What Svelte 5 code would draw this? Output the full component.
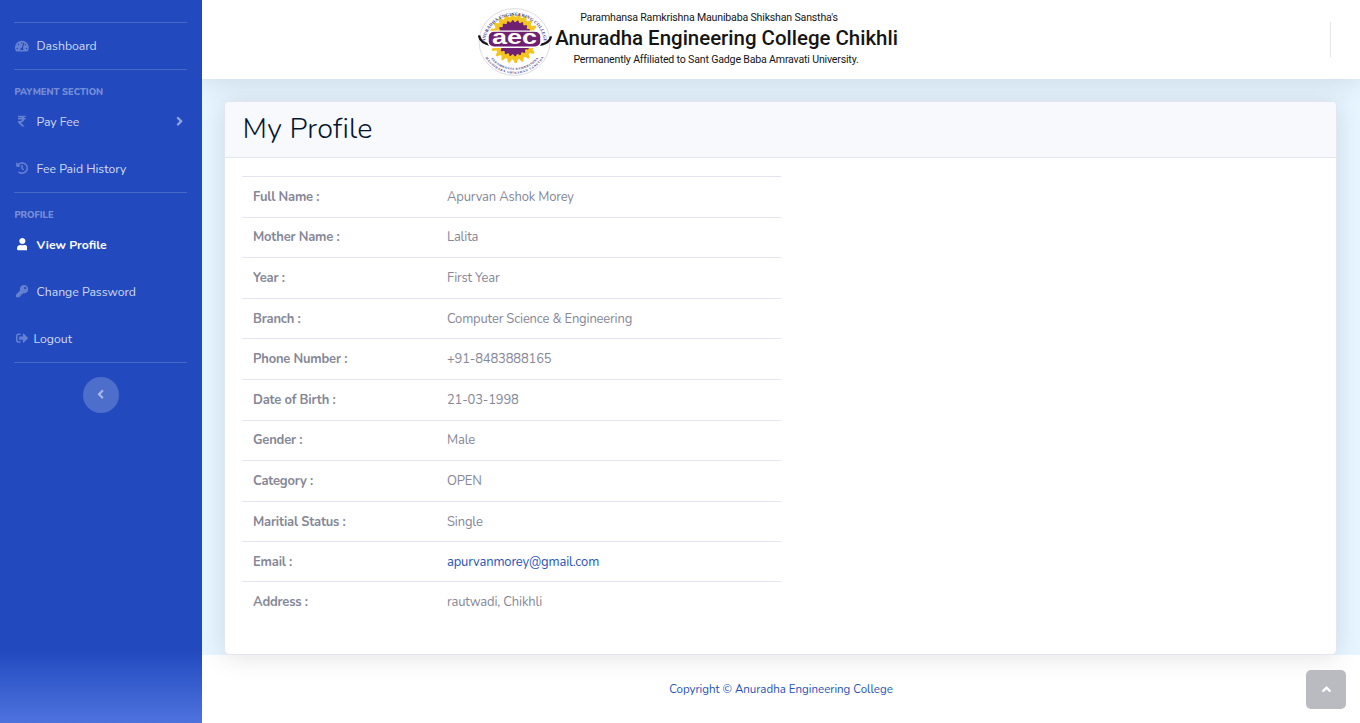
<script>
  const icons = {
    gauge: [576, 'M288 32C128.94 32 0 160.94 0 320c0 52.8 14.25 102.26 39.06 144.8 5.61 9.62 16.3 15.2 27.44 15.2h443c11.14 0 21.83-5.58 27.44-15.2C561.75 422.26 576 372.8 576 320c0-159.06-128.94-288-288-288zm0 64c14.71 0 26.58 10.13 30.32 23.65-1.11 2.26-2.64 4.23-3.45 6.67l-9.22 27.67c-5.13 3.49-10.97 6.01-17.64 6.01-17.67 0-32-14.33-32-32S270.33 96 288 96zM96 384c-17.67 0-32-14.33-32-32s14.33-32 32-32 32 14.33 32 32-14.33 32-32 32zm48-160c-17.67 0-32-14.33-32-32s14.33-32 32-32 32 14.33 32 32-14.33 32-32 32zm246.77-72.41l-61.33 184C343.13 347.33 352 364.54 352 384c0 11.72-3.38 22.55-8.88 32H232.88c-5.5-9.45-8.88-20.28-8.88-32 0-33.94 26.5-61.43 59.9-63.59l61.34-184.01c4.17-12.56 17.73-19.45 30.36-15.17 12.57 4.19 19.35 17.79 15.17 30.36zm14.66 57.2l15.52-46.55c3.47-1.29 7.13-2.23 11.05-2.23 17.67 0 32 14.33 32 32s-14.33 32-32 32c-11.38-.01-20.89-6.28-26.57-15.22zM480 384c-17.67 0-32-14.33-32-32s14.33-32 32-32 32 14.33 32 32-14.33 32-32 32z'],
    rupee: [320, 'M308 96c6.627 0 12-5.373 12-12V44c0-6.627-5.373-12-12-12H12C5.373 32 0 37.373 0 44v44.748c0 6.627 5.373 12 12 12h85.28c27.308 0 48.261 9.958 60.97 27.252H12c-6.627 0-12 5.373-12 12v40c0 6.627 5.373 12 12 12h158.757c-6.217 36.086-32.961 58.632-74.757 58.632H12c-6.627 0-12 5.373-12 12v53.012c0 3.349 1.4 6.546 3.861 8.818l165.052 152.356a12.001 12.001 0 0 0 8.139 3.182h82.562c10.924 0 16.166-13.408 8.139-20.818L116.871 319.906c76.499-2.34 131.144-53.395 138.318-127.906H308c6.627 0 12-5.373 12-12v-40c0-6.627-5.373-12-12-12h-58.69c-3.486-11.541-8.28-22.246-14.252-32H308z'],
    history: [512, 'M504 255.531c.253 136.64-111.18 248.372-247.82 248.468-59.015.042-113.223-20.53-155.822-54.911-11.077-8.94-11.905-25.541-1.839-35.607l11.267-11.267c8.609-8.609 22.353-9.551 31.891-1.984C173.062 425.135 212.781 440 256 440c101.705 0 184-82.311 184-184 0-101.705-82.311-184-184-184-48.814 0-93.149 18.969-126.068 49.932l50.754 50.754c10.08 10.08 2.941 27.314-11.313 27.314H24c-8.837 0-16-7.163-16-16V38.627c0-14.254 17.234-21.393 27.314-11.314l49.372 49.372C129.209 34.136 189.552 8 256 8c136.81 0 247.747 110.78 248 247.531zm-180.912 78.784l9.823-12.63c8.138-10.463 6.253-25.542-4.21-33.679L288 256.349V152c0-13.255-10.745-24-24-24h-16c-13.255 0-24 10.745-24 24v135.651l65.409 50.874c10.463 8.137 25.541 6.253 33.679-4.21z'],
    user: [448, 'M224 256c70.7 0 128-57.3 128-128S294.7 0 224 0 96 57.3 96 128s57.3 128 128 128zm89.6 32h-16.7c-22.2 10.2-46.9 16-72.9 16s-50.6-5.8-72.9-16h-16.7C60.2 288 0 348.2 0 422.4V464c0 26.5 21.5 48 48 48h352c26.5 0 48-21.5 48-48v-41.6c0-74.2-60.2-134.4-134.4-134.4z'],
    key: [512, 'M512 176.001C512 273.203 433.202 352 336 352c-11.22 0-22.19-1.062-32.827-3.069l-24.012 27.014A23.999 23.999 0 0 1 261.223 384H224v40c0 13.255-10.745 24-24 24h-40v40c0 13.255-10.745 24-24 24H24c-13.255 0-24-10.745-24-24v-78.059c0-6.365 2.529-12.47 7.029-16.971l161.802-161.802C163.108 213.814 160 195.271 160 176 160 78.798 238.797.001 335.999 0 433.488-.001 512 78.511 512 176.001zM336 128c0 26.51 21.49 48 48 48s48-21.49 48-48-21.49-48-48-48-48 21.49-48 48z'],
    logout: [512, 'M497 273L329 441c-15 15-41 4.5-41-17v-96H152c-13.3 0-24-10.7-24-24v-96c0-13.3 10.7-24 24-24h136V88c0-21.4 25.9-32 41-17l168 168c9.3 9.4 9.3 24.6 0 34zM192 436v-40c0-6.6-5.4-12-12-12H96c-17.7 0-32-14.3-32-32V160c0-17.7 14.3-32 32-32h84c6.6 0 12-5.4 12-12V76c0-6.6-5.4-12-12-12H96c-53 0-96 43-96 96v192c0 53 43 96 96 96h84c6.6 0 12-5.4 12-12z'],
    right: [256, 'M224.3 273l-136 136c-9.4 9.4-24.6 9.4-33.9 0l-22.6-22.6c-9.4-9.4-9.4-24.6 0-33.9l96.4-96.4-96.4-96.4c-9.4-9.4-9.4-24.6 0-33.9L54.3 103c9.4-9.4 24.6-9.4 33.9 0l136 136c9.5 9.4 9.5 24.6.1 34z'],
    left: [256, 'M31.7 239l136-136c9.4-9.4 24.6-9.4 33.9 0l22.6 22.6c9.4 9.4 9.4 24.6 0 33.9L127.9 256l96.4 96.4c9.4 9.4 9.4 24.6 0 33.9L201.7 409c-9.4 9.4-24.6 9.4-33.9 0l-136-136c-9.5-9.4-9.5-24.6-.1-34z'],
    up: [320, 'M177 159.7l136 136c9.4 9.4 9.4 24.6 0 33.9l-22.6 22.6c-9.4 9.4-24.6 9.4-33.9 0L160 255.9l-96.4 96.4c-9.4 9.4-24.6 9.4-33.9 0L7 329.7c-9.4-9.4-9.4-24.6 0-33.9l136-136c9.4-9.5 24.6-9.5 34-.1z']
  };

  const rows = [
    ['Full Name :', 'Apurvan Ashok Morey'],
    ['Mother Name :', 'Lalita'],
    ['Year :', 'First Year'],
    ['Branch :', 'Computer Science & Engineering'],
    ['Phone Number :', '+91-8483888165'],
    ['Date of Birth :', '21-03-1998'],
    ['Gender :', 'Male'],
    ['Category :', 'OPEN'],
    ['Maritial Status :', 'Single'],
    ['Email :', 'apurvanmorey@gmail.com', true],
    ['Address :', 'rautwadi, Chikhli']
  ];

  const teeth = 22;
  const ring = (outer, inner) => Array.from({ length: teeth * 4 }, (_, i) => {
    const r = i % 4 < 2 ? outer : inner;
    const a = ((i + 0.5) / (teeth * 4)) * Math.PI * 2;
    return `${(36 + r * Math.cos(a)).toFixed(2)},${(32 + r * 1.06 * Math.sin(a)).toFixed(2)}`;
  }).join(' ');
</script>

{#snippet icon(name, size)}
  <svg class="icon" height={size} width={(size * icons[name][0]) / 512} viewBox="0 0 {icons[name][0]} 512" aria-hidden="true"><path d={icons[name][1]} /></svg>
{/snippet}

{#snippet item(name, label)}
  <a class="link" href="#top"><span class="fw">{@render icon(name, 12.24)}</span><span>{label}</span></a>
{/snippet}

<div class="page">
  <nav class="sidebar">
    <hr />
    {@render item('gauge', 'Dashboard')}
    <hr />
    <div class="heading">Payment Section</div>
    <a class="link" href="#top"><span class="fw">{@render icon('rupee', 12.24)}</span><span>Pay Fee</span><span class="arrow">{@render icon('right', 14.4)}</span></a>
    {@render item('history', 'Fee Paid History')}
    <hr />
    <div class="heading">Profile</div>
    <div class="active">{@render item('user', 'View Profile')}</div>
    {@render item('key', 'Change Password')}
    <div class="logout">{@render item('logout', 'Logout')}</div>
    <hr />
    <button class="toggle" aria-label="Collapse">{@render icon('left', 14.4)}</button>
  </nav>

  <div class="content">
    <header>
      <div class="brand">
        <svg class="emblem" width="75" height="68" viewBox="0 0 75 72" preserveAspectRatio="none">
          <defs>
            <path id="arc-top" d="M7 38A29.5 30 0 0 1 66 38" />
            <path id="arc-low" d="M7 36A29.5 29.5 0 0 0 66 36" />
            <path id="arc-bottom" d="M3 36A33.5 33.5 0 0 0 70 36" />
          </defs>
          <circle cx="36.5" cy="36" r="35.4" fill="#fefefe" stroke="#dcdcde" />
          <polygon points={ring(25, 21.5)} fill="#f4c421" />
          <polygon points={ring(18, 16.2)} fill="#702070" />
          <path d="M1 29Q2 37 12 39M73 30Q72 37 62 39" fill="none" stroke="#181318" stroke-width="2.4" />
          <rect x="10" y="24.5" width="53" height="17" rx="6" fill="#702070" stroke="#fff" stroke-width="1.5" />
          <text class="aec" x="14" y="38.5" textLength="45" lengthAdjust="spacingAndGlyphs">aec</text>
          <text class="ring"><textPath href="#arc-top" startOffset="2" textLength="89">ANURADHA ENGINEERING COLLEGE</textPath></text>
          <text class="ring small"><textPath href="#arc-low" startOffset="19" textLength="55">PARAMHANSA RAMKRISHNA</textPath></text>
          <text class="ring small"><textPath href="#arc-bottom" startOffset="17" textLength="71">MAUNIBABA SHIKSHAN SANSTHA</textPath></text>
        </svg>
        <div class="names">
          <span class="trust">Paramhansa Ramkrishna Maunibaba Shikshan Sanstha's</span>
          <span class="college">Anuradha Engineering College Chikhli</span>
          <span class="affil">Permanently Affiliated to Sant Gadge Baba Amravati University.</span>
        </div>
      </div>
      <div class="rule"></div>
    </header>
    <main>
      <section class="card">
        <h1>My Profile</h1>
        <div class="body">
          <table>
            <tbody>
              {#each rows as [label, value, linked]}
                <tr class:linked>
                  <th>{label}</th>
                  <td>{#if linked}<a href="#top">{value}</a>{:else}{value}{/if}</td>
                </tr>
              {/each}
            </tbody>
          </table>
        </div>
      </section>
    </main>
    <footer>Copyright © Anuradha Engineering College</footer>
  </div>
  <a class="scroll" href="#top" aria-label="Scroll to top">{@render icon('up', 14.4)}</a>
</div>

<style>
  :global(body) { margin: 0; overflow: hidden; }
  .page, .page :global(*) { box-sizing: border-box; }
  .page { display: flex; height: 723px; width: 1360px; font-family: Nunito, "Open Sans", sans-serif; color: #858796; position: relative; }
  a { text-decoration: none; color: inherit; }
  .icon { display: block; fill: currentColor; }

  .sidebar { width: 202px; height: 723px; flex: none; padding-top: 22px; background: linear-gradient(180deg, #224abe 0, #224abe 650px, #4e73df 723px); color: rgba(255, 255, 255, .8); position: relative; z-index: 3; }
  hr { border: 0; height: 1px; margin: 0 15px 0 14px; background: rgba(255, 255, 255, .17); }
  .link { display: flex; align-items: center; height: 47px; padding: 0 14.4px; font-size: 12.24px; line-height: 18px; white-space: nowrap; }
  hr + .link { height: 46px; }
  .fw { width: 15.3px; margin-right: 6.8px; display: flex; justify-content: center; color: rgba(255, 255, 255, .3); }
  .arrow { margin-left: auto; width: 16px; display: flex; justify-content: center; color: rgba(255, 255, 255, .5); }
  .heading { height: 28px; padding: 15px 14.4px 0; font-size: 9.36px; line-height: 14px; font-weight: 800; text-transform: uppercase; color: rgba(255, 255, 255, .4); }
  .active .link { font-weight: 700; color: #fff; }
  .active .fw { color: #fff; }
  .logout .fw { margin-right: 3.8px; }
  .toggle { display: flex; align-items: center; justify-content: center; width: 36px; height: 36px; margin: 14px auto 0; padding: 0 0 1px; border: 0; border-radius: 50%; background: rgba(255, 255, 255, .2); color: rgba(255, 255, 255, .5); }

  .content { flex: 1; min-width: 0; display: flex; flex-direction: column; background: #fff; }
  header { height: 79px; flex: none; display: flex; align-items: center; background: #fff; box-shadow: 0 2px 25px rgba(58, 59, 69, .15); padding: 0 29px 0 276px; position: relative; }
  .brand { display: flex; height: 79px; padding-top: 4px; }
  .emblem { display: block; flex: none; margin-top: 3.5px; }
  .aec { font: 900 21px "Liberation Sans", sans-serif; fill: #fff; }
  .ring { font: 700 4.6px "Liberation Serif", serif; fill: #433a91; }
  .ring.small { font-size: 3.3px; }
  .names { display: flex; flex-direction: column; width: 345px; margin-left: 1px; align-items: center; font-family: Roboto, sans-serif; color: #151515; white-space: nowrap; }
  .trust { font-size: 10.6px; letter-spacing: -.18px; line-height: 14px; padding-top: 7px; margin-left: -35px; }
  .college { font-size: 20.45px; font-weight: 500; line-height: 26px; }
  .affil { font-size: 10.6px; letter-spacing: -.18px; line-height: 14px; padding-top: 2px; margin-left: -21px; }
  .rule { width: 1px; height: 35px; margin-left: auto; background: #e3e6f0; }

  main { height: 576px; flex: none; padding: 22px 23px 0 22px; background: #e6f5ff; }
  .card { height: 554px; border: 1px solid #e3e6f0; border-radius: 5px; background: #fff; box-shadow: 0 2px 25px rgba(58, 59, 69, .15); overflow: hidden; position: relative; }
  h1 { height: 56px; margin: 0; padding: 0 17.5px; border-bottom: 1px solid #e3e6f0; background: #f8f9fc; color: #04162f; font-size: 28.8px; letter-spacing: .2px; line-height: 54px; font-weight: 320; }
  .body { padding: 18px 17px; }
  table { width: 539px; border-collapse: collapse; font-size: 12.96px; line-height: 18px; }
  tr { height: 40.6px; }
  tr.linked { height: 40px; }
  th, td { border-top: 1px solid #e3e6f0; padding: 0 11px; text-align: left; vertical-align: middle; }
  th { width: 194px; font-weight: 700; letter-spacing: -.18px; }
  td { font-weight: 400; letter-spacing: -.15px; }
  td a, footer { color: #2653b4; }
  footer { height: 68px; text-align: center; font-size: 11.52px; line-height: 69px; }
  .scroll { position: absolute; right: 14px; bottom: 14px; width: 40px; height: 39px; border-radius: 5px; background: #babbc1; color: #fff; display: flex; align-items: center; justify-content: center; }
</style>
